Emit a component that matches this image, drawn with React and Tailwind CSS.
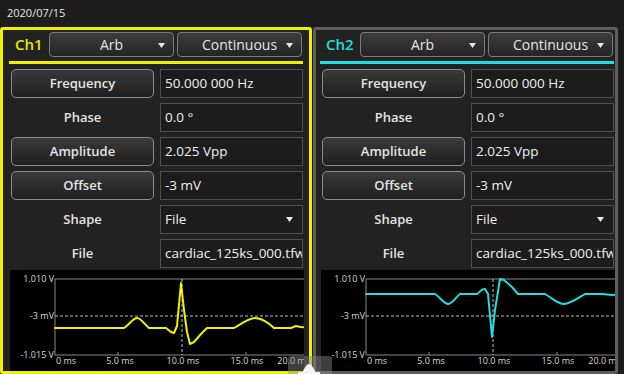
import React from "react";

const Arrow = ({ className = "" }) => (
  <svg width="7" height="5" viewBox="0 0 7 5" className={className}>
    <path d="M0 0 L7 0 L3.5 5 Z" fill="#e8e8e8" />
  </svg>
);

function Dropdown({ text, w }) {
  return (
    <div
      className={`relative ${w} h-[25px] rounded-[4px] border border-[#7a7a7a] bg-gradient-to-b from-[#3c3c3c] to-[#242424] flex items-center justify-center text-[14px] font-medium text-[#e6e6e6]`}
    >
      <span>{text}</span>
      <Arrow className="absolute right-[8px] top-[10px]" />
    </div>
  );
}

function Btn({ text }) {
  return (
    <div className="w-[143px] h-full rounded-[5px] border-[1.5px] border-[#8c8c8c] bg-gradient-to-b from-[#3a3a3a] to-[#1f1f1f] flex items-center justify-center text-[13px] font-semibold text-[#e4e4e4]">
      {text}
    </div>
  );
}

function Label({ text }) {
  return (
    <div className="w-[143px] h-full flex items-center justify-center text-[13px] font-semibold text-[#e4e4e4]">
      {text}
    </div>
  );
}

function Value({ text, arrow }) {
  return (
    <div className="relative w-[143px] h-full border border-[#505050] bg-[#1c1c1c] flex items-center pl-[4px] overflow-hidden whitespace-nowrap text-[13.5px] text-[#f0f0f0]">
      {text}
      {arrow && <Arrow className="absolute right-[9px] top-[11px]" />}
    </div>
  );
}

function Row({ left, value, arrow }) {
  return (
    <div className="flex h-[29px] gap-[6px]">
      {left}
      <Value text={value} arrow={arrow} />
    </div>
  );
}

const yellowPath =
  "M44,58 L113,58 C118,55 122,48 126,48 C130,48 134,55 138,58 L155,58 L160,62 L163,63 L166,56 L170,13 L173,40 L176,62 L179,74 L183,72 L190,64 L196,58 L223,58 C230,54 238,48 244,48 C250,48 258,53 263,58 L280,58 L285,56 L290,57 L299,58";
const cyanPath =
  "M44,24 L113,24 C118,27 122,34 126,34 C130,34 134,27 138,24 L155,24 C158,22 160,18 163,19 L166,24 L170,67 L173,40 L178,9 L182,10 L190,17 L196,24 L223,24 C230,28 236,34 242,34 C248,34 256,28 263,24 L280,24 L290,25 L299,24";

function Chart({ path, color }) {
  const xl = [
    { x: 45, t: "0 ms", a: "start" },
    { x: 109, t: "5.0 ms", a: "middle" },
    { x: 172, t: "10.0 ms", a: "middle" },
    { x: 236, t: "15.0 ms", a: "middle" },
    { x: 299, t: "20.0 ms", a: "end" },
  ];
  return (
    <div className="flex-1 bg-black mt-[2px] -mx-[1px] overflow-hidden">
      <svg width="304" height="100" viewBox="-1 0 304 100" style={{ fontFamily: "'Open Sans', sans-serif" }}>
        <rect x="44" y="9" width="255" height="76" fill="none" stroke="#8a8a8a" strokeWidth="1" />
        <line x1="44" y1="46" x2="299" y2="46" stroke="#bdbdbd" strokeWidth="1" strokeDasharray="3 2" />
        <line x1="171" y1="9" x2="171" y2="85" stroke="#bdbdbd" strokeWidth="1" strokeDasharray="3 2" />
        <line x1="107" y1="82" x2="107" y2="85" stroke="#8a8a8a" />
        <line x1="235" y1="82" x2="235" y2="85" stroke="#8a8a8a" />
        <path d={path} fill="none" stroke={color} strokeWidth="2" strokeLinejoin="round" strokeLinecap="round" />
        <g fill="#d8d8d8" fontSize="9">
          <text x="43" y="12" textAnchor="end">1.010 V</text>
          <text x="43" y="49" textAnchor="end">-3 mV</text>
          <text x="43" y="88" textAnchor="end">-1.015 V</text>
          {xl.map((l) => (
            <text key={l.t} x={l.x} y="94" textAnchor={l.a}>
              {l.t}
            </text>
          ))}
        </g>
      </svg>
    </div>
  );
}

function Panel({ ch, color, borderCls, lineCls, textCls, path, padCls, w }) {
  return (
    <div className={`${w} h-[347px] shrink-0 border-[3px] ${borderCls} rounded-[3px] bg-[#222222] flex flex-col ${padCls} pt-[2px]`}>
      <div className="flex items-center h-[25px]">
        <div className={`w-[38px] pl-[4px] text-[15px] font-semibold ${textCls}`}>{ch}</div>
        <div className="flex gap-[3px]">
          <Dropdown text="Arb" w="w-[125px]" />
          <Dropdown text="Continuous" w="w-[125px]" />
        </div>
      </div>
      <div className={`h-[3px] mt-[4px] -ml-[2px] ${lineCls}`} />
      <div className="flex flex-col gap-[5px] mt-[5px]">
        <Row left={<Btn text="Frequency" />} value="50.000 000 Hz" />
        <Row left={<Label text="Phase" />} value="0.0 °" />
        <Row left={<Btn text="Amplitude" />} value="2.025 Vpp" />
        <Row left={<Btn text="Offset" />} value="-3 mV" />
        <Row left={<Label text="Shape" />} value="File" arrow />
        <Row left={<Label text="File" />} value="cardiac_125ks_000.tfw" />
      </div>
      <Chart path={path} color={color} />
    </div>
  );
}

export default function App() {
  return (
    <div
      className="relative w-[624px] h-[374px] overflow-hidden bg-[#1c1c1c] flex flex-col"
      style={{ fontFamily: "'Open Sans', 'Noto Sans', sans-serif" }}
    >
      <div className="h-[27px] shrink-0 flex items-center pl-[7px] text-[11px] text-[#e6e6e6]">2020/07/15</div>
      <div className="flex gap-[1px]">
        <Panel
          ch="Ch1"
          color="#f2f200"
          borderCls="border-[#f0f000]"
          lineCls="bg-[#f0f000]"
          textCls="text-[#e8e800]"
          path={yellowPath}
          padCls="pl-[8px] pr-[6px]"
          w="w-[312px]"
        />
        <Panel
          ch="Ch2"
          color="#22dede"
          borderCls="border-[#5e5e5e]"
          lineCls="bg-[#20dede]"
          textCls="text-[#22dede]"
          path={cyanPath}
          padCls="pl-[6px] pr-[1px]"
          w="w-[305px]"
        />
      </div>
      <div className="absolute left-[288px] top-[356px] w-[44px] h-[18px] bg-[#8a8a8a]/45 rounded-t-[3px] pointer-events-none">
        <svg width="44" height="18" viewBox="0 0 44 18" className="absolute left-0 top-0">
          <path d="M13 18 C16 14 18 8 21 8 C24 8 26 14 29 18 Z" fill="#f4f4f4" />
          <rect x="10" y="16" width="22" height="2" fill="#f4f4f4" />
        </svg>
      </div>
    </div>
  );
}
